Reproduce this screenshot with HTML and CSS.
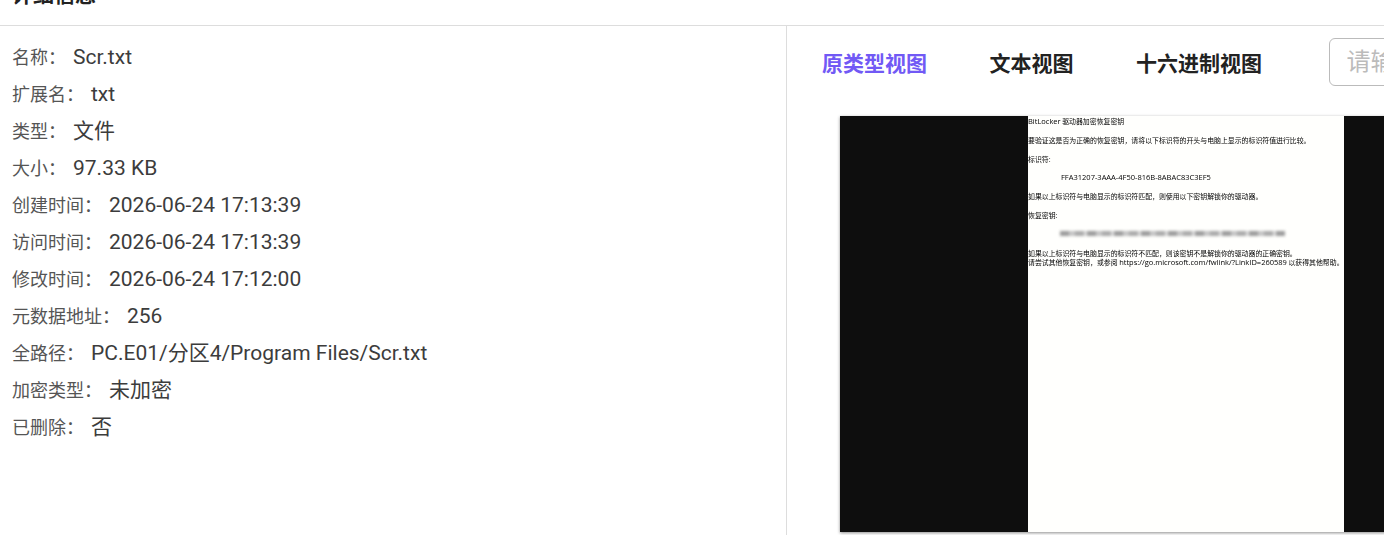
FILE: index.html
```html
<!DOCTYPE html>
<html lang="zh-CN">
<head>
  <meta charset="UTF-8">
  <title>详细信息</title>
  <link rel="stylesheet" href="styles.css">
</head>
<body>
  <div class="header">
    <h2>详细信息</h2>
  </div>
  <div class="main">
    <div class="details">
      <div class="info-row"><span class="info-label">名称：</span><span class="info-value">Scr.txt</span></div>
      <div class="info-row"><span class="info-label">扩展名：</span><span class="info-value">txt</span></div>
      <div class="info-row"><span class="info-label">类型：</span><span class="info-value">文件</span></div>
      <div class="info-row"><span class="info-label">大小：</span><span class="info-value">97.33 KB</span></div>
      <div class="info-row"><span class="info-label">创建时间：</span><span class="info-value">2026-06-24 17:13:39</span></div>
      <div class="info-row"><span class="info-label">访问时间：</span><span class="info-value">2026-06-24 17:13:39</span></div>
      <div class="info-row"><span class="info-label">修改时间：</span><span class="info-value">2026-06-24 17:12:00</span></div>
      <div class="info-row"><span class="info-label">元数据地址：</span><span class="info-value">256</span></div>
      <div class="info-row"><span class="info-label">全路径：</span><span class="info-value">PC.E01/分区4/Program Files/Scr.txt</span></div>
      <div class="info-row"><span class="info-label">加密类型：</span><span class="info-value">未加密</span></div>
      <div class="info-row"><span class="info-label">已删除：</span><span class="info-value">否</span></div>
    </div>
    <div class="viewer">
      <div class="toolbar">
        <span class="tab active">原类型视图</span>
        <span class="tab">文本视图</span>
        <span class="tab">十六进制视图</span>
        <input class="search" type="text" placeholder="请输入关键字">
      </div>
      <div class="preview">
        <div class="side"></div>
        <div class="doc">
          <p class="line first"><span class="latin">BitLocker</span> 驱动器加密恢复密钥</p>
          <p class="line">要验证这是否为正确的恢复密钥，请将以下标识符的开头与电脑上显示的标识符值进行比较。</p>
          <p class="line">标识符:</p>
          <p class="line indent">FFA31207-3AAA-4F50-816B-8ABAC83C3EF5</p>
          <p class="line">如果以上标识符与电脑显示的标识符匹配，则使用以下密钥解锁你的驱动器。</p>
          <p class="line">恢复密钥:</p>
          <div class="key-blur"></div>
          <p class="line">如果以上标识符与电脑显示的标识符不匹配，则该密钥不是解锁你的驱动器的正确密钥。</p>
          <p class="line tight">请尝试其他恢复密钥，或参阅 <span class="latin">https://go.microsoft.com/fwlink/?LinkID=260589</span> 以获得其他帮助。</p>
        </div>
        <div class="side right"></div>
      </div>
    </div>
  </div>
</body>
</html>
```

FILE: styles.css
```css
body {
  margin: 0;
  height: 535px;
  overflow: hidden;
  background-color: #fff;
  color: #333;
  font-family: Roboto, "Noto Sans CJK SC", sans-serif;
}

.header {
  height: 25px;
  display: flex;
  align-items: flex-end;
  overflow: hidden;
  border-bottom: 1px solid #ddd;
  padding-left: 12px;
}

h2 {
  margin: 0 0 18px 0;
  flex: none;
  font-size: 21px;
  line-height: 24px;
  font-weight: 700;
  color: #222;
}

.main {
  display: flex;
  height: 509px;
}

.details {
  width: 787px;
  flex: none;
  box-sizing: border-box;
  border-right: 1px solid #ddd;
  padding: 13px 12px 0;
}

.info-row {
  display: flex;
  align-items: baseline;
  height: 37px;
  line-height: 37px;
  white-space: nowrap;
}

.info-label {
  font-size: 18px;
  color: #555;
  margin-right: 7px;
}

.info-value {
  font-size: 21px;
  color: #3c3c3c;
}

.viewer {
  flex: 1;
  min-width: 0;
  overflow: hidden;
}

.toolbar {
  display: flex;
  align-items: center;
  gap: 62.5px;
  height: 48px;
  margin-top: 12px;
  padding-left: 35px;
}

.tab {
  flex: none;
  font-size: 21px;
  font-weight: 700;
  color: #222;
}

.tab.active {
  color: #7159f5;
}

.search {
  flex: none;
  width: 220px;
  height: 48px;
  box-sizing: border-box;
  margin-left: 4px;
  padding: 0 17px;
  border: 1px solid #bbb;
  border-radius: 6px;
  font-family: Roboto, "Noto Sans CJK SC", sans-serif;
  font-size: 24px;
}

.search::placeholder {
  color: #bbb;
}

.preview {
  display: flex;
  width: 620px;
  height: 416px;
  margin: 30px 0 0 53px;
  box-shadow: 0 1px 3px rgba(0, 0, 0, 0.45);
}

.side {
  width: 188px;
  flex: none;
  background-color: #0e0e0e;
}

.side.right {
  width: 116px;
}

.doc {
  width: 316px;
  flex: none;
  overflow: hidden;
  background-color: #fffffd;
  color: #000;
  font-family: "Noto Sans CJK SC", sans-serif;
  font-size: 6.9px;
  line-height: 10px;
  white-space: nowrap;
}

.line {
  margin: 8.8px 0 0 0;
  filter: blur(0.4px);
}

.line.first {
  margin-top: 0;
}

.line.indent {
  margin-left: 33px;
  font-family: "Open Sans", sans-serif;
  font-size: 7.5px;
}

.line.tight {
  margin-top: -1px;
}

.latin {
  font-family: "Open Sans", sans-serif;
  font-size: 7.5px;
}

.key-blur {
  width: 225px;
  height: 5px;
  margin: 11px 0 12px 32px;
  background: repeating-linear-gradient(90deg, #9a9a9a 0 9px, #c4c4c4 9px 15px, #a8a8a8 15px 24px, #dcdcdc 24px 27px);
  filter: blur(1.5px);
}
```
